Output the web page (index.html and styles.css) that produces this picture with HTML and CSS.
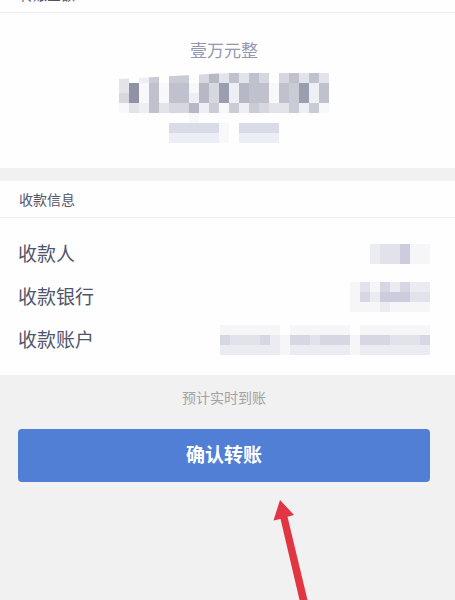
FILE: index.html
```html
<!DOCTYPE html>
<html lang="zh-CN">
<head>
  <meta charset="UTF-8">
  <meta name="viewport" content="width=device-width, initial-scale=1">
  <title>确认转账</title>
  <link rel="stylesheet" href="styles.css">
</head>
<body>
  <main class="page">
    <section class="card card-amount">
      <h2 class="card-title">转账金额</h2>
      <div class="amount">
        <p class="amount-text">壹万元整</p>
        <svg class="mosaic mosaic-amount" id="amountMask" width="210" height="70"></svg>
      </div>
    </section>

    <section class="card">
      <h2 class="card-title">收款信息</h2>
      <dl class="info">
        <div class="info-row">
          <dt>收款人</dt>
          <dd><svg class="mosaic" id="nameMask" width="60" height="20"></svg></dd>
        </div>
        <div class="info-row">
          <dt>收款银行</dt>
          <dd><svg class="mosaic" id="bankMask" width="80" height="30"></svg></dd>
        </div>
        <div class="info-row">
          <dt>收款账户</dt>
          <dd><svg class="mosaic" id="accountMask" width="210" height="30"></svg></dd>
        </div>
      </dl>
    </section>

    <div class="action">
      <p class="tip">预计实时到账</p>
      <button class="confirm" type="button">确认转账</button>
      <svg class="arrow" width="36" height="102" viewBox="0 0 36 102">
        <path fill="#e13642" d="M7 0 L21 15 L14.5 16.8 L35 102 L27 102 L7.5 19 L.5 20.5 Z"/>
      </svg>
    </div>
  </main>

  <script src="script.js"></script>
</body>
</html>
```

FILE: styles.css
```css
* {
  box-sizing: border-box;
}
body {
  margin: 0;
  background: #f1f1f1;
  color: #51556b;
  font-family: "Noto Sans CJK SC", sans-serif;
}
h2, p, dl, dd {
  margin: 0;
}
.page {
  min-height: 100vh;
  display: flex;
  flex-direction: column;
  overflow: hidden;
}
.card {
  background: #fefefe;
  margin-bottom: 13px;
}
.card + .card {
  margin-bottom: 0;
}
/* the page is scrolled a little past the first title */
.card-amount {
  margin-top: -24px;
}
.card-title {
  padding: 6px 19px;
  border-bottom: 1px solid #f0f0f2;
  font-size: 14px;
  line-height: 24px;
  font-weight: 400;
}
.amount {
  display: flex;
  flex-direction: column;
  align-items: center;
  gap: 11px;
  padding: 25px 25px 25px 18px;
}
.amount-text {
  color: #9298ae;
  font-size: 17px;
  line-height: 24px;
}
.mosaic {
  display: block;
}
.mosaic-amount {
  clip-path: polygon(0 6px, 90px 1px, 110px 0, 100% 0, 100% 100%, 0 100%);
}
.info {
  padding: 14px 25px 14px 18px;
}
.info-row {
  display: flex;
  justify-content: space-between;
  align-items: center;
  height: 43px;
  font-size: 19px;
  line-height: 28px;
}
.info-row dt {
  padding-bottom: 2px;
}
.action {
  position: relative;
  flex: 1;
  padding: 10px 25px 0 18px;
  overflow: hidden;
}
.tip {
  margin-bottom: 20px;
  color: #a2a2a2;
  font-size: 14px;
  line-height: 24px;
  text-align: center;
}
.confirm {
  display: block;
  width: 100%;
  height: 53px;
  padding: 0 0 3px;
  border: 0;
  border-radius: 4px;
  background: #527fd6;
  color: #fff;
  font-family: inherit;
  font-size: 19px;
  font-weight: 700;
  line-height: 28px;
}
.arrow {
  position: absolute;
  left: 60%;
  top: 125px;
}
```

FILE: script.js
```js
// one character per 10px tile, "." is empty
const shades = {
  1: "#f8f8fa", 2: "#eeeff4", 3: "#e3e4ea", 4: "#d6d7df", 5: "#c9cbd5",
  6: "#bfc1cd", 7: "#b6b8c6", 8: "#9b9eaf", 9: "#8f92a4",
  a: "#f6f6f9", b: "#ebebf2", c: "#e2e2eb", d: "#d7d7e4", e: "#ccccdc",
  f: "#d9dce7", g: "#ebeef6"
};

function drawMosaic(id, rows) {
  const svg = document.getElementById(id);
  rows.forEach((row, y) => {
    [...row].forEach((key, x) => {
      if (!shades[key]) return;
      const tile = document.createElementNS("http://www.w3.org/2000/svg", "rect");
      tile.setAttribute("x", x * 10);
      tile.setAttribute("y", y * 10);
      tile.setAttribute("width", 10);
      tile.setAttribute("height", 10);
      tile.setAttribute("fill", shades[key]);
      svg.appendChild(tile);
    });
  });
}

drawMosaic("amountMask", [
  "3.25.55.4736364.46363",
  "391616617482766165826",
  "491616627482766165826",
  "132634472515254335251",
  ".......1.............",
  ".....fffff1.ffff.....",
  ".....ggggg1.gggg....."
]);
drawMosaic("nameMask", ["bcceaa", "bcceaa"]);
drawMosaic("bankMask", ["acadbdbb", "adbeeecc", "aaabaaaa"]);
drawMosaic("accountMask", [
  "aaaaaa.aaaaaa.aaaaaaa",
  "dcccdbaddcdddadddcccd",
  "bbbbbbabbbbbbabbbbbbb"
]);
```
